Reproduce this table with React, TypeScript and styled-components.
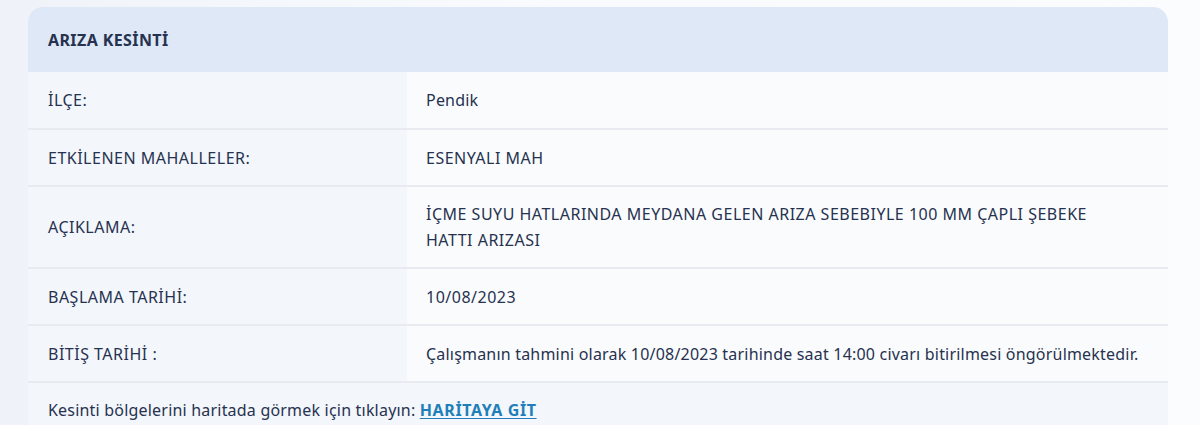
import React from "react";
import styled, { createGlobalStyle } from "styled-components";

const ink = `#26324f`;
const line = `#e7ebf1`;

const GlobalStyle = createGlobalStyle`
  html, body {
    margin: 0;
    padding: 0;
  }
  body {
    background: linear-gradient(90deg, #eff3f9 0%, #f8fafd 40%, #fbfcfe 100%);
    font-family: "Noto Sans", Lato, sans-serif;
    color: ${ink};
    height: 425px;
    overflow: hidden;
  }
`;

const Page = styled.div`
  padding: 7px 32px 0 28px;
`;

const Card = styled.section`
  width: 1140px;
  border-radius: 15px 15px 0 0;
  overflow: hidden;
`;

const CardHeader = styled.header`
  height: 65px;
  background-color: #dfe8f6;
  display: flex;
  align-items: center;
  padding-left: 20px;
  font-size: 16px;
  font-weight: 700;
  letter-spacing: 0.4px;
`;

const Row = styled.div`
  display: grid;
  grid-template-columns: 379px 1fr;
  border-bottom: 2px solid ${line};
`;

const Label = styled.div<{ $h: number }>`
  min-height: ${(p) => p.$h}px;
  background-color: #f3f6fb;
  display: flex;
  align-items: center;
  padding-left: 20px;
  font-size: 16px;
  letter-spacing: 0.5px;
`;

const Value = styled.div<{ $caps: boolean }>`
  background-color: #fafbfd;
  display: flex;
  align-items: center;
  padding: 0 20px 0 19px;
  font-size: 16px;
  letter-spacing: ${(p) => (p.$caps ? 0.5 : 0.2)}px;
  line-height: 26px;
`;

const ValueText = styled.span<{ $max?: number }>`
  max-width: ${(p) => (p.$max ? `${p.$max}px` : "none")};
`;

const Footer = styled.div`
  background-color: #f3f6fb;
  padding: 16px 20px 20px;
  font-size: 16px;
  letter-spacing: 0.2px;
`;

const MapLink = styled.a`
  color: #1f7fb8;
  font-weight: 700;
  letter-spacing: 0.6px;
  text-decoration: underline;
  text-underline-offset: 2px;
`;

const rows: { label: string; value: string; h: number; caps: boolean; max?: number }[] = [
  { label: "İLÇE:", value: "Pendik", h: 56, caps: false },
  { label: "ETKİLENEN MAHALLELER:", value: "ESENYALI MAH", h: 55, caps: true },
  {
    label: "AÇIKLAMA:",
    value:
      "İÇME SUYU HATLARINDA MEYDANA GELEN ARIZA SEBEBIYLE 100 MM ÇAPLI ŞEBEKE HATTI ARIZASI",
    h: 80,
    caps: true,
    max: 700,
  },
  { label: "BAŞLAMA TARİHİ:", value: "10/08/2023", h: 55, caps: true },
  {
    label: "BİTİŞ TARİHİ :",
    value:
      "Çalışmanın tahmini olarak 10/08/2023 tarihinde saat 14:00 civarı bitirilmesi öngörülmektedir.",
    h: 55,
    caps: false,
  },
];

export default function App() {
  return (
    <>
      <GlobalStyle />
      <Page>
        <Card>
          <CardHeader>ARIZA KESİNTİ</CardHeader>
          {rows.map((r) => (
            <Row key={r.label}>
              <Label $h={r.h}>{r.label}</Label>
              <Value $caps={r.caps}>
                <ValueText $max={r.max}>{r.value}</ValueText>
              </Value>
            </Row>
          ))}
          <Footer>
            Kesinti bölgelerini haritada görmek için tıklayın:{" "}
            <MapLink href="#">HARİTAYA GİT</MapLink>
          </Footer>
        </Card>
      </Page>
    </>
  );
}
